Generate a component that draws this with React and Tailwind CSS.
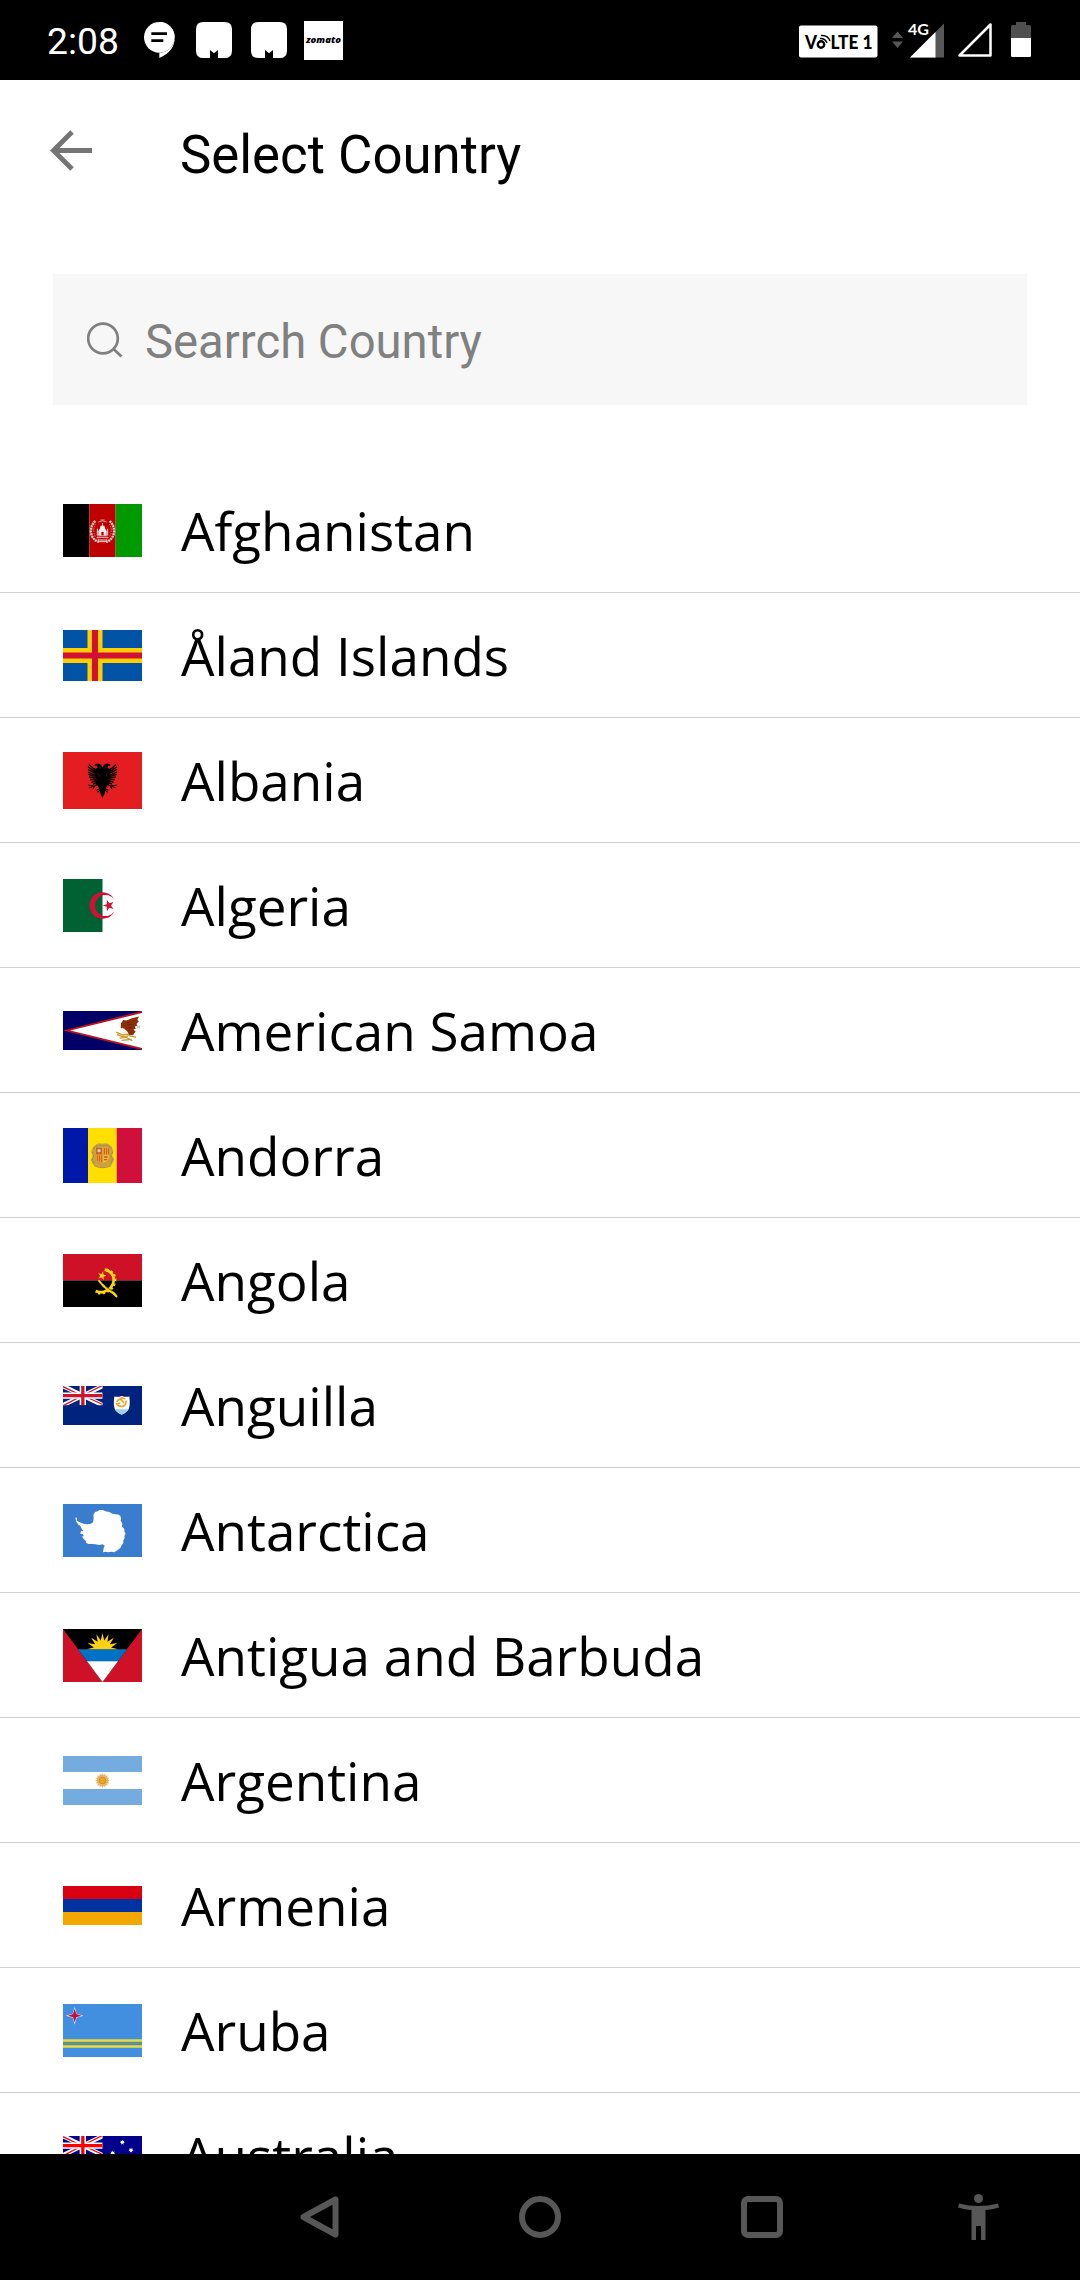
import React from "react";

function Star({ cx, cy, r, inner = 0.382, points = 5, rotate = -90, fill }) {
  const pts = [];
  for (let i = 0; i < points * 2; i++) {
    const a = ((rotate + (i * 180) / points) * Math.PI) / 180;
    const q = i % 2 ? r * inner : r;
    pts.push(`${(cx + q * Math.cos(a)).toFixed(2)},${(cy + q * Math.sin(a)).toFixed(2)}`);
  }
  return <polygon points={pts.join(" ")} fill={fill} />;
}

function UnionJack({ blue, red }) {
  return (
    <svg x="0" y="0" width="119" height="58" viewBox="0 0 119 58">
      <rect width="119" height="58" fill={blue} />
      <path d="M0 0L119 58M119 0L0 58" stroke="#fff" strokeWidth="13" />
      <path d="M0 2L54 28M65 31L119 56M119 -2L66 25M54 31L0 60" stroke={red} strokeWidth="4" />
      <path d="M59.500 0V58M0 29H119" stroke="#fff" strokeWidth="19" />
      <path d="M59.500 0V58M0 29H119" stroke={red} strokeWidth="10" />
    </svg>
  );
}

/* Flags share a 237-unit width; the height follows each flag's own ratio. */
const flags = {
  afghanistan: {
    size: "h-[53px]",
    h: 159,
    art: (
      <>
        <rect width="79" height="159" />
        <rect x="79" width="79" height="159" fill="#bf0000" />
        <rect x="158" width="79" height="159" fill="#009900" />
        <path d="M97 51Q82 65 84 86Q88 108 108 114M140 51Q155 65 153 86Q149 108 129 114" fill="none" stroke="#f3d0d0" strokeWidth="7" strokeDasharray="6 2" />
        <path d="M98 60Q90 72 93 88Q97 101 108 106M139 60Q147 72 144 88Q140 101 129 106" fill="none" stroke="#dd8a8a" strokeWidth="3" strokeDasharray="4 3" />
        <path d="M106 95V81L111 73Q110 66 118.500 64Q127 66 126 73L131 81V95Z" fill="#fbeaea" />
        <path d="M115 94V84h7v10z" fill="#bf0000" />
        <path d="M103 95V74M134 95V74M118.500 66V57M104 108H133M106 113H131" stroke="#f7dada" strokeWidth="3" />
        <path d="M102 100H135" stroke="#e7a5a5" strokeWidth="4" />
        <path d="M106 54Q118 47 131 54M112 48H125" fill="none" stroke="#e09a9a" strokeWidth="3" />
      </>
    ),
  },
  aland: {
    size: "h-[51px]",
    h: 153,
    art: (
      <>
        <rect width="237" height="153" fill="#0053a5" />
        <path d="M96 0V153M0 76.500H237" stroke="#ffce00" strokeWidth="45" />
        <path d="M96 0V153M0 76.500H237" stroke="#d21034" strokeWidth="18" />
      </>
    ),
  },
  albania: {
    size: "h-[57px]",
    h: 170,
    art: (
      <>
        <rect width="237" height="170" fill="#e41e20" />
        <path
          d="M118.500 46L114 38L105 34L97 36L94 41L101 41L104 47L98 50L92 48L98 56V70L104 84L98 97L104 99L110 112L112 124L118.500 137L125 124L127 112L133 99L139 97L133 84L139 70V56L145 48L139 50L133 47L136 41L143 41L140 36L132 34L123 38Z"
          fill="#000"
        />
        <path
          d="M103 60L78 37M103 63L75 44M103 67L75 52M103 71L75 60M103 75L76 67M104 79L78 74M104 83L81 82M105 86L85 90M106 89L90 96M134 60L159 37M134 63L162 44M134 67L162 52M134 71L162 60M134 75L161 67M133 79L159 74M133 83L156 82M132 86L152 90M131 89L147 96"
          stroke="#000"
          strokeWidth="4"
        />
        <path d="M106 97L92 101L76 99M94 101L79 107M95 101L90 110M131 97L145 101L161 99M143 101L158 107M142 101L147 110M112 108L101 114M112 113L103 120M125 108L136 114M125 113L134 120" fill="none" stroke="#000" strokeWidth="3" />
        <path d="M107 45L112 50M130 45L125 50M104 62L109 74M133 62L128 74" stroke="#9a1516" strokeWidth="1.500" />
      </>
    ),
  },
  algeria: {
    size: "h-[53px]",
    h: 158,
    art: (
      <>
        <rect width="237" height="158" fill="#fff" />
        <rect width="118.500" height="158" fill="#006233" />
        <path d="M155 63A39.500 39.500 0 1 0 155 95A31.600 31.600 0 1 1 155 63Z" fill="#d21034" />
        <Star cx={137} cy={79} r={18} rotate={180} fill="#d21034" />
      </>
    ),
  },
  samoa: {
    size: "h-[39px]",
    h: 118,
    art: (
      <>
        <rect width="237" height="118" fill="#006" />
        <path d="M237 0L0 59L237 118Z" fill="#bd1021" />
        <path d="M237 6L22 59L237 112Z" fill="#fff" />
        <path d="M173 50L174 37L181 27L190 29L207 22L228 17L223 27L228 31L220 39L224 43L215 48L219 53L211 57L218 62L211 72L199 74L193 62L183 53L177 56Z" fill="#8a2f0a" />
        <path d="M190 37L202 33M191 44L207 40M197 52L209 48" stroke="#5b1b04" strokeWidth="2" />
        <path d="M170 58L177 51L185 55L189 65L177 64Z" fill="#fff" stroke="#c8a088" strokeWidth="1" />
        <path d="M222 46L231 42V53L221 53Z" fill="#c9d0d6" />
        <path d="M160 64L178 72L192 70L203 76L219 79M162 71L176 77L195 76M170 82L190 80L208 90M176 89L206 86" fill="none" stroke="#c99a25" strokeWidth="4" />
      </>
    ),
  },
  andorra: {
    size: "h-[55px]",
    h: 165,
    art: (
      <>
        <rect width="76" height="165" fill="#0018a8" />
        <rect x="75" width="86" height="165" fill="#fedf00" />
        <rect x="161" width="76" height="165" fill="#d0103a" />
        <path d="M90 58Q103 42 118 47Q136 42 147 58L151 70L147 82L153 95L145 112L132 114L118 120L104 114L91 111L84 96L90 84L85 69Z" fill="#c7a43c" />
        <path d="M91 63Q103 48 118 53Q134 48 145 63M87 72L92 83L87 96L95 108M149 72L144 83L150 96L142 107" fill="none" stroke="#a28c68" strokeWidth="4" strokeDasharray="7 3" />
        <path d="M97 57H139V91Q137 102 118 108Q99 102 97 91Z" fill="#d8a040" />
        <path d="M99 59H117V79H99Z" fill="#c5622d" />
        <path d="M121 59H137V79H121Z" fill="#edae20" />
        <path d="M99 82H117V104Q101 99 99 92Z" fill="#efaa25" />
        <path d="M121 82H137V92Q135 99 121 104Z" fill="#f2bf35" />
        <path d="M124 60V79M130 60V79M136 60V79M103 82V98M109 82V101M115 82V103" stroke="#cf5527" strokeWidth="3" />
        <path d="M123 87H134M123 95H133" stroke="#cf5527" strokeWidth="4" />
        <circle cx="108" cy="68" r="5" fill="#f5d8b2" />
        <path d="M94 113Q118 125 144 113" stroke="#b99154" strokeWidth="4" fill="none" />
      </>
    ),
  },
  angola: {
    size: "h-[53px]",
    h: 159,
    art: (
      <>
        <rect width="237" height="80" fill="#ce1126" />
        <rect y="79.500" width="237" height="80" fill="#000" />
        <path d="M125 47Q154 54 152 81Q148 106 123 113Q109 117 98 111" fill="none" stroke="#f9d616" strokeWidth="8" />
        <path d="M130 46Q160 54 157 82Q151 110 124 117Q110 121 98 115" fill="none" stroke="#f9d616" strokeWidth="6" strokeDasharray="7 7" />
        <path d="M104 80L109 77Q121 94 148 110Q160 117 164 127L160 131Q151 120 139 114Q117 99 104 80Z" fill="#f9d616" />
        <path d="M126 96L148 112" stroke="#000" strokeWidth="1.500" />
        <Star cx={117} cy={65} r={14} rotate={-75} fill="#f9d616" />
      </>
    ),
  },
  anguilla: {
    size: "h-[39px]",
    h: 118,
    art: (
      <>
        <rect width="237" height="118" fill="#00247d" />
        <UnionJack blue="#00247d" red="#cf142b" />
        <path d="M154 32Q166 34 176 30Q188 34 199 32Q203 62 195 73Q189 81 176 87Q163 81 157 73Q150 62 154 32Z" fill="#fff" />
        <path d="M156 70H197Q190 81 176 86Q162 81 156 70Z" fill="#9bd1ef" />
        <path d="M166 43L176 36L185 38M162 46Q170 37 177 43L182 51M190 46Q188 59 181 61Q166 64 161 54L170 52" fill="none" stroke="#f0a328" strokeWidth="5" strokeLinecap="round" />
      </>
    ),
  },
  antarctica: {
    size: "h-[53px]",
    h: 159,
    art: (
      <>
        <rect width="237" height="159" fill="#3a7dce" />
        <path
          d="M38 39L42 43L41 50L49 54L61 59L72 61L84 59L90 55L92 42L91 32L96 24L104 22L109 18L120 18L127 22L139 24L148 29L158 31L167 32L172 35L174 44L173 50L178 58L177 68L184 75L184 82L188 89L184 96L185 103L181 108L181 117L176 124L172 132L164 138L154 145L145 143L136 145L127 143L120 145L122 132L125 125L119 121L108 123L98 121L87 120L77 120L70 117L68 110L62 105L57 98L62 95L59 90L52 89L54 81L61 81L56 74L52 66L45 61L40 53L38 47Z"
          fill="#fff"
        />
      </>
    ),
  },
  antigua: {
    size: "h-[53px]",
    h: 158,
    art: (
      <>
        <rect width="237" height="158" fill="#ce1126" />
        <path d="M0 0H237L118.500 158Z" fill="#000" />
        <path d="M44.500 60H192.500L164 97H73Z" fill="#0072c6" />
        <path d="M72 96H165L118.500 158Z" fill="#fff" />
        <clipPath id="sunrise">
          <rect x="60" width="120" height="60" />
        </clipPath>
        <g clipPath="url(#sunrise)">
          <Star cx={118.5} cy={60} r={48} inner={0.55} points={16} fill="#fcd116" />
        </g>
      </>
    ),
  },
  argentina: {
    size: "h-[49px]",
    h: 147,
    art: (
      <>
        <rect width="237" height="147" fill="#74acdf" />
        <rect y="48" width="237" height="51" fill="#fff" />
        <Star cx={118.5} cy={73.5} r={22} inner={0.75} points={16} fill="#e9b468" />
        <circle cx="118.500" cy="73.500" r="10" fill="#eda51c" stroke="#c08428" strokeWidth="2" />
      </>
    ),
  },
  armenia: {
    size: "h-[39px]",
    h: 117,
    art: (
      <>
        <rect width="237" height="39" fill="#d90012" />
        <rect y="39" width="237" height="39" fill="#0033a0" />
        <rect y="78" width="237" height="39" fill="#f2a800" />
      </>
    ),
  },
  aruba: {
    size: "h-[53px]",
    h: 159,
    art: (
      <>
        <rect width="237" height="159" fill="#418fde" />
        <rect y="105" width="237" height="27" fill="#5f9389" />
        <path d="M0 109.500H237M0 127.500H237" stroke="#e5d94f" strokeWidth="8" />
        <Star cx={35} cy={35} r={27} inner={0.31} points={4} fill="#dbe5f5" />
        <Star cx={35} cy={35} r={20} inner={0.36} points={4} fill="#c8103e" />
      </>
    ),
  },
  australia: {
    size: "h-[39px]",
    h: 118,
    art: (
      <>
        <rect width="237" height="118" fill="#00008b" />
        <UnionJack blue="#00008b" red="#f00" />
        <Star cx={59} cy={88} r={18} inner={0.45} points={7} fill="#fff" />
        <Star cx={178} cy={19} r={8} inner={0.5} points={7} fill="#fff" />
        <Star cx={149} cy={52} r={8} inner={0.5} points={7} fill="#fff" />
        <Star cx={204} cy={43} r={8} inner={0.5} points={7} fill="#fff" />
        <Star cx={178} cy={98} r={8} inner={0.5} points={7} fill="#fff" />
        <Star cx={190} cy={64} r={4} fill="#fff" />
      </>
    ),
  },
};

const countries = [
  ["afghanistan", "Afghanistan"],
  ["aland", "Åland Islands"],
  ["albania", "Albania"],
  ["algeria", "Algeria"],
  ["samoa", "American Samoa"],
  ["andorra", "Andorra"],
  ["angola", "Angola"],
  ["anguilla", "Anguilla"],
  ["antarctica", "Antarctica"],
  ["antigua", "Antigua and Barbuda"],
  ["argentina", "Argentina"],
  ["armenia", "Armenia"],
  ["aruba", "Aruba"],
  ["australia", "Australia"],
];

function Flag({ id }) {
  const { size, h, art } = flags[id];
  return (
    <svg className={`w-[79px] shrink-0 ${size}`} viewBox={`0 0 237 ${h}`} preserveAspectRatio="none">
      {art}
    </svg>
  );
}

function MailIcon() {
  return (
    <svg className="h-9 w-9" viewBox="0 0 108 108" fill="#fff">
      <path d="M22 0H86Q108 0 108 22V86Q108 108 86 108H66V84L54 94L42 84V108H22Q0 108 0 86V22Q0 0 22 0Z" />
    </svg>
  );
}

function StatusBar() {
  return (
    <header className="flex h-20 shrink-0 justify-between bg-black pr-12 pl-[47px] text-white">
      <div className="flex items-center">
        <span className="mt-[3px] w-[97px] text-[37.3px] leading-none">2:08</span>
        <svg className="h-9 w-[31px]" viewBox="0 0 93 108">
          <path d="M46 0A46 46 0 1 1 46 92V108Q93 88 92 46" fill="#fff" />
          <circle cx="46" cy="46" r="46" fill="#fff" />
          <path d="M22 35H69M22 56H58" stroke="#000" strokeWidth="8" />
        </svg>
        <div className="ml-[21px] flex gap-[19px]">
          <MailIcon />
          <MailIcon />
        </div>
        <div className="ml-[17px] flex h-[39px] w-[39px] items-center justify-center bg-white">
          <span className="font-['Open_Sans'] text-[9.5px] leading-none font-extrabold text-black italic">zomato</span>
        </div>
      </div>
      <svg className="h-20 w-[237px]" viewBox="795 0 237 80">
        <rect x="799" y="25.500" width="78.500" height="32" rx="2" fill="#fff" />
        <g fontFamily="Lato" fontWeight="900" fontSize="18">
          <text x="805" y="49" textLength="12" lengthAdjust="spacingAndGlyphs">V</text>
          <text x="830.500" y="49" textLength="42" lengthAdjust="spacingAndGlyphs">LTE 1</text>
        </g>
        <circle cx="821" cy="44.500" r="3.200" fill="none" stroke="#000" strokeWidth="2.400" />
        <path d="M820 38.500Q825 38 827 43M821 35.500Q828 35 830 41" fill="none" stroke="#000" strokeWidth="1.500" />
        <path d="M892 38L897.500 31.500L903 38ZM892 41.500H903L897.500 48Z" fill="#575757" />
        <path d="M910 57.500L944 23.500V57.500Z" fill="#575757" />
        <path d="M906 20H929V31L910 38H906Z" fill="#000" />
        <path d="M910 57.500L935.500 32V57.500Z" fill="#fff" />
        <text x="908" y="34.500" fontFamily="Lato" fontWeight="700" fontSize="16" fill="#fff" textLength="21" lengthAdjust="spacingAndGlyphs">4G</text>
        <path d="M959.500 55.500L990.500 24.500V55.500Z" fill="none" stroke="#fff" strokeWidth="2.500" strokeLinejoin="round" />
        <path d="M1011 38V26.500Q1011 25 1013 25H1016V22H1026V25H1029Q1031 25 1031 26.500V38Z" fill="#4f4f4f" />
        <path d="M1011 38H1031V55.500Q1031 57 1029.500 57H1012.500Q1011 57 1011 55.500Z" fill="#fff" />
      </svg>
    </header>
  );
}

function NavBar() {
  return (
    <nav className="flex h-[126px] shrink-0 items-center bg-black pl-[300px] text-[#575757]">
      <svg className="h-[42px] w-[39px]" viewBox="0 0 39 42" fill="none" stroke="currentColor" strokeWidth="6" strokeLinejoin="round">
        <path d="M3.500 21L35.500 3.500V38.500Z" />
      </svg>
      <svg className="ml-[180px] h-[42px] w-[42px]" viewBox="0 0 42 42" fill="none" stroke="currentColor" strokeWidth="6">
        <circle cx="21" cy="21" r="18" />
      </svg>
      <svg className="ml-[180px] h-[42px] w-[42px]" viewBox="0 0 42 42" fill="none" stroke="currentColor" strokeWidth="6">
        <rect x="3" y="3" width="36" height="36" rx="4" />
      </svg>
      <svg className="ml-[175px] h-[46px] w-[41px]" viewBox="0 0 41 46" fill="currentColor">
        <circle cx="20.500" cy="4.500" r="4.500" />
        <path d="M1 9.500Q20.500 14.500 40 9.500L41 13.500Q34 15.500 27.500 16V46H23V32H18V46H13.500V16Q7 15.500 0 13.500Z" />
      </svg>
    </nav>
  );
}

export default function App() {
  return (
    <div className="flex h-[2280px] w-[1080px] flex-col overflow-hidden bg-white font-['Roboto',sans-serif] text-black">
      <StatusBar />
      <div className="flex h-[194px] shrink-0 items-start pl-[50px]">
        <svg className="mt-[50px] h-[41px] w-[42px]" viewBox="0 0 42 41" fill="none" stroke="#757575" strokeWidth="5">
          <path d="M22 2L3.500 20.500L22 39M3.500 20.500H42" />
        </svg>
        <h1 className="mt-[45px] ml-[88px] text-[52.75px] leading-[60px]">Select Country</h1>
      </div>
      <div className="mx-[53px] flex h-[131px] shrink-0 items-center bg-[#f7f7f7] pl-[34px] text-[#808080]">
        <svg className="h-9 w-9" viewBox="0 0 36 36" fill="none" stroke="currentColor" strokeWidth="2.700">
          <circle cx="16" cy="16.500" r="14.800" />
          <path d="M26.500 27L34.500 34.500" />
        </svg>
        <span className="mt-[7px] ml-[22px] text-[47.25px] leading-none">Searrch Country</span>
      </div>
      <ul className="min-h-0 flex-1 overflow-hidden pt-[63px]">
        {countries.map(([id, name]) => (
          <li key={id} className="flex h-[125px] items-center border-b border-[#d0d0d0] pl-[63px]">
            <Flag id={id} />
            <span className="mt-px ml-[39px] font-['Open_Sans'] text-[53px] leading-[73px]">{name}</span>
          </li>
        ))}
      </ul>
      <NavBar />
    </div>
  );
}
